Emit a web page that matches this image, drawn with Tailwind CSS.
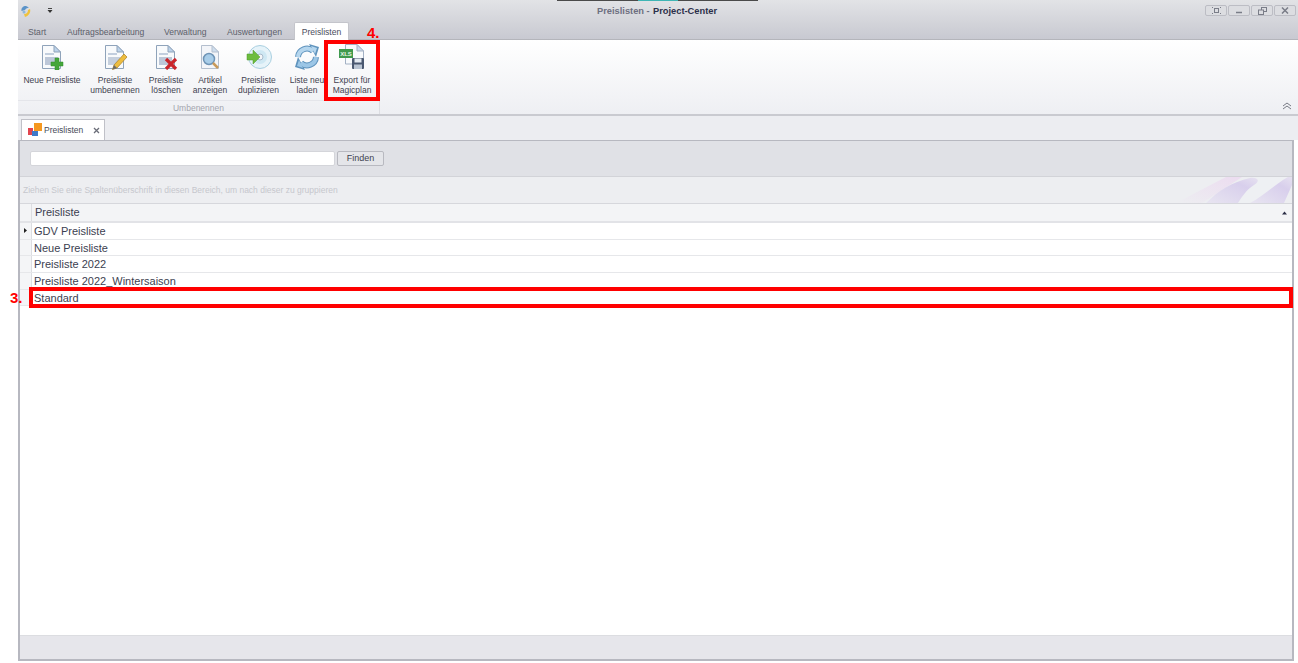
<!DOCTYPE html>
<html lang="de">
<head>
    <meta charset="UTF-8">
    <meta name="viewport" content="width=device-width, initial-scale=1.0">
    <title>Preislisten - Project-Center</title>
    <script src="https://cdn.jsdelivr.net/npm/@tailwindcss/browser@4"></script>
</head>
<body class="bg-white overflow-hidden font-['Liberation_Sans',Arial,sans-serif]">
<div class="relative w-[1298px] h-[663px] flex">
    <!-- weisser Rand links -->
    <div class="w-[18px] shrink-0"></div>

    <div class="w-[1280px] flex flex-col">
        <!-- Titelleiste + Tabs -->
        <div class="relative h-[40px] bg-gradient-to-b from-[#e2e3e6] to-[#c8c9d1] border-b border-[#b4b5bb]">
            <div class="absolute left-[539px] top-0 w-[201px] h-px bg-[#4a4a4a] flex justify-center"><div class="w-[40px] h-px bg-[#3fb5b5]"></div></div>
            <div class="h-[22px] flex items-center relative">
                <svg class="ml-[2px]" width="12" height="13" viewBox="0 0 12 13">
                    <path d="M6 1C3 1 1 3 1.500 6L5 5C6 3 8 3 9 2.500Z" fill="#5a93c8"/>
                    <path d="M10 4C11 7 9 11 5 12L4 9C7 9 8 7 8 5Z" fill="#efc23c"/>
                    <circle cx="4" cy="7" r="1.500" fill="#8fb8dc"/>
                </svg>
                <svg class="ml-[15px]" width="6" height="6" viewBox="0 0 6 6"><path d="M1 0.500H5" stroke="#444"/><path d="M0.500 2H5.500L3 5Z" fill="#333"/></svg>
                <div class="absolute left-[579px] top-[6px] flex text-[9.300px] leading-[11px] font-bold whitespace-nowrap">
                    <span class="text-[#6d6f80] w-[56px]">Preislisten -</span>
                    <span class="text-[#2c2f4a]">Project-Center</span>
                </div>
                <div class="absolute left-[1187px] top-[5px] flex gap-px">
                    <div class="w-[22px] h-[11px] rounded-[2px] border border-[#bcbdc4] bg-[#dcdde1] flex items-center justify-center">
                        <svg width="9" height="7" viewBox="0 0 9 7" fill="none" stroke="#7a7d88"><rect x="2.500" y="1.500" width="4" height="4"/><path d="M0 0.500H1M8 0.500H9M0 6.500H1M8 6.500H9"/></svg>
                    </div>
                    <div class="w-[22px] h-[11px] rounded-[2px] border border-[#bcbdc4] bg-[#dcdde1] flex items-center justify-center">
                        <svg width="8" height="7" viewBox="0 0 8 7"><path d="M1 5.500H7" stroke="#7a7d88" stroke-width="1.500"/></svg>
                    </div>
                    <div class="w-[22px] h-[11px] rounded-[2px] border border-[#bcbdc4] bg-[#dcdde1] flex items-center justify-center">
                        <svg width="9" height="8" viewBox="0 0 9 8" fill="none" stroke="#7a7d88"><rect x="3.500" y="0.500" width="5" height="4"/><rect x="0.500" y="3" width="5" height="4.500" fill="#dcdde1"/></svg>
                    </div>
                    <div class="w-[22px] h-[11px] rounded-[2px] border border-[#bcbdc4] bg-[#dcdde1] flex items-center justify-center">
                        <svg width="8" height="7" viewBox="0 0 8 7" stroke="#7a7d88" stroke-width="1.500"><path d="M1 0.500L7 6.500M7 0.500L1 6.500"/></svg>
                    </div>
                </div>
            </div>
            <div class="h-[18px] flex text-[8.600px] text-[#5c5f6b] whitespace-nowrap">
                <div class="w-[49px] pl-[10px] pt-[4px]">Start</div>
                <div class="w-[97px] pt-[4px]">Auftragsbearbeitung</div>
                <div class="w-[63px] pt-[4px]">Verwaltung</div>
                <div class="w-[67px] pt-[4px]">Auswertungen</div>
                <div class="w-[55px] h-[18px] bg-white border border-b-0 border-[#c4c5cb] rounded-t-[2px] text-center pt-[3px] text-[#4a4d5c]">Preislisten</div>
            </div>
        </div>

        <!-- Ribbon -->
        <div class="h-[76px] bg-gradient-to-b from-white to-[#eeeff3] border-b-2 border-[#c9cad0] flex">
            <div class="w-[362px] border-r border-[#dcdde2] flex flex-col">
                <div class="h-[60px] flex text-[8.500px] leading-[10px] text-[#3f4250] text-center">
                    <div class="w-[68px] flex flex-col items-center pt-[4px]">
                        <svg width="26" height="26" viewBox="0 0 26 26">
                            <path d="M3.500 1.500H15L21.500 8V24.500H3.500Z" fill="#f8fafc" stroke="#8fa3ba"/>
                            <path d="M15 1.500V8H21.500Z" fill="#bcd3ea" stroke="#8fa3ba"/>
                            <rect x="6" y="9" width="9" height="2" fill="#c2cede"/>
                            <rect x="6" y="13" width="13" height="8" fill="#bcc7d8"/>
                            <path d="M16 14H20V18H24V22H20V26H16V22H12V18H16Z" fill="#45a63a" stroke="#2f8a2a" stroke-width="0.500"/>
                        </svg>
                        <div class="mt-[5px] whitespace-nowrap">Neue Preisliste</div>
                    </div>
                    <div class="w-[58px] flex flex-col items-center pt-[4px]">
                        <svg width="26" height="26" viewBox="0 0 26 26">
                            <path d="M3.500 1.500H15L21.500 8V24.500H3.500Z" fill="#f8fafc" stroke="#8fa3ba"/>
                            <path d="M15 1.500V8H21.500Z" fill="#bcd3ea" stroke="#8fa3ba"/>
                            <rect x="6" y="9" width="9" height="2" fill="#c2cede"/>
                            <rect x="6" y="13" width="12" height="8" fill="#c5cfdd"/>
                            <path d="M22 10L25 13L15 24L10.500 25.500L12 21Z" fill="#edbd3f" stroke="#a97c22" stroke-width="0.700"/>
                            <path d="M12 21L10.500 25.500L15 24Z" fill="#6a6a6a"/>
                        </svg>
                        <div class="mt-[5px]">Preisliste<br>umbenennen</div>
                    </div>
                    <div class="w-[44px] flex flex-col items-center pt-[4px]">
                        <svg width="26" height="26" viewBox="0 0 26 26">
                            <path d="M3.500 1.500H15L21.500 8V24.500H3.500Z" fill="#f8fafc" stroke="#8fa3ba"/>
                            <path d="M15 1.500V8H21.500Z" fill="#bcd3ea" stroke="#8fa3ba"/>
                            <rect x="6" y="9" width="9" height="2" fill="#c2cede"/>
                            <rect x="6" y="13" width="13" height="8" fill="#bcc7d8"/>
                            <path d="M13 15L23 25M23 15L13 25" stroke="#c9252b" stroke-width="3.200"/>
                        </svg>
                        <div class="mt-[5px]">Preisliste<br>löschen</div>
                    </div>
                    <div class="w-[44px] flex flex-col items-center pt-[4px]">
                        <svg width="26" height="26" viewBox="0 0 26 26">
                            <path d="M4.500 1.500H15L21.500 8V24.500H4.500Z" fill="#f3f5f9" stroke="#b4bfce"/>
                            <path d="M15 1.500V8H21.500Z" fill="#cfdeee" stroke="#b4bfce"/>
                            <circle cx="12" cy="15" r="5.500" fill="#a8cde9" stroke="#6f94b6" stroke-width="1.500"/>
                            <path d="M16 19L21 24" stroke="#c99a5a" stroke-width="2.500"/>
                        </svg>
                        <div class="mt-[5px]">Artikel<br>anzeigen</div>
                    </div>
                    <div class="w-[53px] flex flex-col items-center pt-[4px]">
                        <svg width="26" height="26" viewBox="0 0 26 26">
                            <circle cx="14" cy="13" r="11.500" fill="#e6f3f9" stroke="#a9cfe0"/>
                            <circle cx="14" cy="13" r="7" fill="#cfe8f3"/>
                            <circle cx="14" cy="13" r="3" fill="#f4f6f8" stroke="#a9bbcc"/>
                            <path d="M1 10H7V6L14 13L7 20V16H1Z" fill="#6cbc3e" stroke="#4f9a2c" stroke-width="0.500"/>
                        </svg>
                        <div class="mt-[5px]">Preisliste<br>duplizieren</div>
                    </div>
                    <div class="w-[44px] flex flex-col items-center pt-[4px] whitespace-nowrap">
                        <svg width="28" height="26" viewBox="0 0 28 26" fill="none">
                            <path d="M5 13A9 9 0 0 1 20 7" stroke="#5f93bd" stroke-width="6"/>
                            <path d="M16 0L26 3L23 13Z" fill="#5f93bd"/>
                            <path d="M5 13A9 9 0 0 1 20 7" stroke="#b5d6ee" stroke-width="4"/>
                            <path d="M18 2L24 4L22 10Z" fill="#b5d6ee"/>
                            <path d="M23 13A9 9 0 0 1 8 19" stroke="#5f93bd" stroke-width="6"/>
                            <path d="M12 26L2 23L5 13Z" fill="#5f93bd"/>
                            <path d="M23 13A9 9 0 0 1 8 19" stroke="#9cc6e6" stroke-width="4"/>
                            <path d="M10 24L4 22L6 16Z" fill="#9cc6e6"/>
                        </svg>
                        <div class="mt-[5px]">Liste neu<br>laden</div>
                    </div>
                    <div class="w-[46px] flex flex-col items-center pt-[4px]">
                        <svg width="28" height="26" viewBox="0 0 28 26">
                            <path d="M7.500 0.500H19L25.500 7V20H7.500Z" fill="#f8fafc" stroke="#a3b1c4"/>
                            <path d="M19 0.500V7H25.500Z" fill="#cbdcec" stroke="#a3b1c4"/>
                            <rect x="1" y="5" width="14" height="9" fill="#3f9a4d"/>
                            <text x="8" y="12" text-anchor="middle" font-size="6" font-weight="700" fill="#e6f5e6" font-family="Liberation Sans">XLS</text>
                            <rect x="14" y="14" width="12" height="11" rx="1" fill="#4a5870"/>
                            <rect x="16.500" y="14.500" width="7" height="4" fill="#e4eaf1"/>
                            <rect x="16" y="20.500" width="8" height="4.500" fill="#b9c4d2"/>
                        </svg>
                        <div class="mt-[5px] whitespace-nowrap">Export für<br>Magicplan</div>
                    </div>
                </div>
                <div class="h-[14px] border-t border-[#e4e5ea] text-center text-[8.500px] leading-[14px] text-[#a3a5ae]">Umbenennen</div>
            </div>
            <div class="flex-1 flex justify-end items-end pb-[4px] pr-[6px]">
                <svg width="10" height="8" viewBox="0 0 10 8" fill="none" stroke="#777a84"><path d="M1 4L5 1L9 4M1 7L5 4L9 7"/></svg>
            </div>
        </div>

        <!-- Dokument-Tab -->
        <div class="h-[24px] bg-[#ecedf1] flex items-end pl-[3px]">
            <div class="w-[84px] h-[21px] bg-white border border-b-0 border-[#c0c1c8] flex items-center text-[8.500px] text-[#474a58]">
                <svg class="ml-[6px]" width="15" height="14" viewBox="0 0 15 14">
                    <rect x="0" y="5" width="5" height="7" fill="#e2454f"/>
                    <rect x="6" y="0" width="8" height="8" fill="#f5981f"/>
                    <rect x="4" y="8" width="6" height="5" fill="#3e79c9"/>
                </svg>
                <span class="ml-px">Preislisten</span>
                <svg class="ml-[10px]" width="7" height="7" viewBox="0 0 7 7" stroke="#6a6d78" stroke-width="1.300"><path d="M1 1L6 6M6 1L1 6"/></svg>
            </div>
        </div>

        <!-- Panel -->
        <div class="mr-[4px] h-[521px] bg-white border-x-2 border-b-2 border-t border-[#b7b8c0] flex flex-col">
            <div class="h-[36px] bg-[#e0e1e6] border-b border-[#d2d3d8] flex items-start pt-[10px] pl-[10px]">
                <div class="w-[305px] h-[15px] bg-white border border-[#d4d5da] rounded-[2px]"></div>
                <div class="ml-[2px] w-[47px] h-[15px] bg-[#e4e5e9] border border-[#b8b9c0] rounded-[2px] text-center text-[9px] leading-[13px] text-[#3f4250]">Finden</div>
            </div>
            <div class="relative h-[27px] bg-[#edeef1] border-b border-[#d6d7dc] pl-[3px] text-[8.500px] leading-[26px] text-[#c6c7cd] overflow-hidden whitespace-nowrap">
                Ziehen Sie eine Spaltenüberschrift in diesen Bereich, um nach dieser zu gruppieren
                <svg class="absolute right-0 top-0" width="130" height="26" viewBox="0 0 130 26">
                    <defs>
                        <linearGradient id="pink" x1="0" y1="1" x2="1" y2="0">
                            <stop offset="0" stop-color="#edeef1"/>
                            <stop offset="1" stop-color="#ecdcf0"/>
                        </linearGradient>
                        <linearGradient id="swoosh" x1="0" y1="1" x2="1" y2="0">
                            <stop offset="0" stop-color="#e8e5f1"/>
                            <stop offset="0.700" stop-color="#d8cfec"/>
                            <stop offset="1" stop-color="#e6e1f0"/>
                        </linearGradient>
                    </defs>
                    <path d="M14 26L64 0H80L40 26Z" fill="url(#pink)"/>
                    <path d="M43 26C58 14 72 4 96 0H128V12C120 18 116 22 112 26Z" fill="#eef0f3"/>
                    <path d="M44 26C56 14 70 5 88 1C94 0 100 3 92 8C84 13 80 20 76 26Z" fill="url(#swoosh)"/>
                    <path d="M88 26C100 20 112 8 126 0H130V8L122 26Z" fill="url(#swoosh)"/>
                </svg>
            </div>
            <div class="h-[19px] flex bg-[#f3f4f6] border-b-2 border-[#e2e3e7] text-[11px] leading-[17px] text-[#3b3e50]">
                <div class="w-[12px] border-r border-[#dcdde1]"></div>
                <div class="flex-1 pl-[3px]">Preisliste</div>
                <svg class="mt-[7px] mr-[5px]" width="5" height="4" viewBox="0 0 5 4"><path d="M0 3.500H5L2.500 0.500Z" fill="#2a2d45"/></svg>
            </div>
            <div class="flex-1 flex flex-col text-[11px] text-[#3b3e50]">
                <div class="h-[16.700px] flex border-b border-[#e6e7ea]">
                    <div class="w-[12px] bg-[#f4f5f7] border-r border-[#dcdde1] flex items-center justify-center"><svg width="3" height="5" viewBox="0 0 3 5"><path d="M0 0L3 2.500L0 5Z" fill="#222"/></svg></div>
                    <div class="pl-[2px] leading-[16px]">GDV Preisliste</div>
                </div>
                <div class="h-[16.700px] flex border-b border-[#e6e7ea]">
                    <div class="w-[12px] bg-[#f4f5f7] border-r border-[#dcdde1]"></div>
                    <div class="pl-[2px] leading-[16px]">Neue Preisliste</div>
                </div>
                <div class="h-[16.700px] flex border-b border-[#e6e7ea]">
                    <div class="w-[12px] bg-[#f4f5f7] border-r border-[#dcdde1]"></div>
                    <div class="pl-[2px] leading-[16px]">Preisliste 2022</div>
                </div>
                <div class="h-[16.700px] flex border-b border-[#e6e7ea]">
                    <div class="w-[12px] bg-[#f4f5f7] border-r border-[#dcdde1]"></div>
                    <div class="pl-[2px] leading-[16px]">Preisliste 2022_Wintersaison</div>
                </div>
                <div class="h-[16.700px] flex border-b border-[#e6e7ea]">
                    <div class="w-[12px] bg-[#f4f5f7] border-r border-[#dcdde1]"></div>
                    <div class="pl-[2px] leading-[16px]">Standard</div>
                </div>
            </div>
            <div class="h-[24px] bg-[#e6e6eb] border-t border-[#dcdde1]"></div>
        </div>
    </div>

    <!-- Markierungen aus der Anleitung -->
    <div class="absolute left-[324px] top-[40px] w-[56px] h-[61px] border-4 border-[#ff0000]"></div>
    <div class="absolute left-[29px] top-[287px] w-[1264px] h-[21px] border-4 border-[#ff0000]"></div>
    <div class="absolute left-[367px] top-[24px] text-[15px] leading-[17px] font-bold text-[#ff0000]">4.</div>
    <div class="absolute left-[10px] top-[289px] text-[15px] leading-[17px] font-bold text-[#ff0000]">3.</div>
</div>
</body>
</html>
